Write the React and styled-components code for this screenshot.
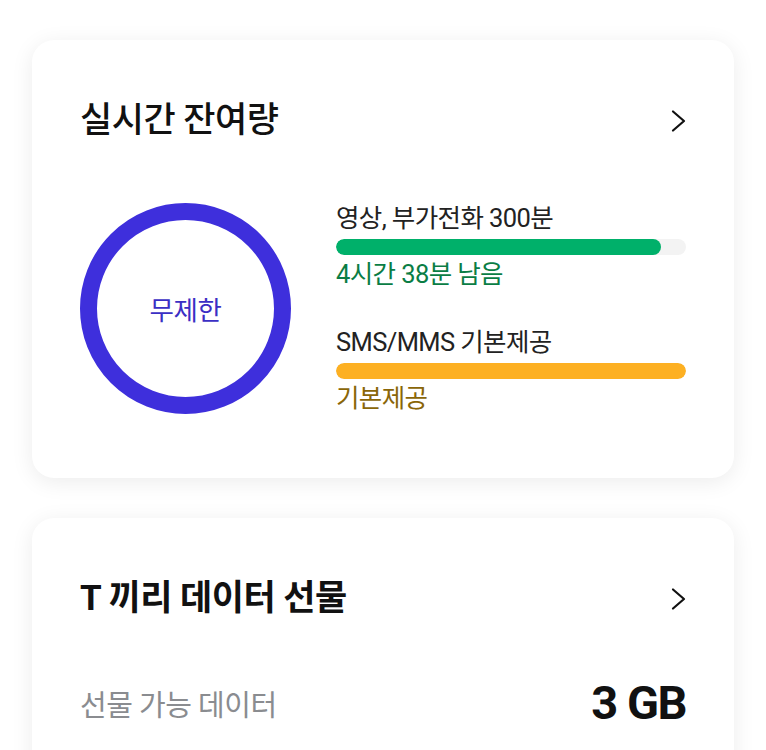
import React from "react";
import styled, { createGlobalStyle } from "styled-components";

const GlobalStyle = createGlobalStyle`
  body {
    margin: 0;
    background: #ffffff;
    font-family: Roboto, "Noto Sans CJK KR", sans-serif;
    color: #111;
  }
`;

const Page = styled.div`
  display: flex;
  flex-direction: column;
  gap: 40px;
  padding: 40px 32px 0;
`;

const Card = styled.section`
  background: #fff;
  border-radius: 22px;
  box-shadow: 0 4px 22px rgba(0, 0, 0, 0.08);
  padding: ${(p) => p.$pad};
`;

const Header = styled.div`
  display: flex;
  align-items: center;
  justify-content: space-between;
`;

const Title = styled.h2`
  margin: 0;
  font-size: 35px;
  line-height: 40px;
  font-weight: ${(p) => p.$weight || 500};
  letter-spacing: -0.5px;
`;

const ChevronBox = styled.span`
  display: flex;
  margin-right: -5px;
`;

const Body = styled.div`
  display: flex;
  align-items: center;
  gap: 45px;
  margin-top: 61px;
`;

const Ring = styled.div`
  position: relative;
  width: 211px;
  height: 211px;
  flex: none;
  display: grid;
  place-items: center;

  svg {
    position: absolute;
    inset: 0;
  }
`;

const RingLabel = styled.span`
  position: relative;
  font-size: 26.5px;
  color: #3b2fc4;
  letter-spacing: -0.3px;
`;

const Usage = styled.div`
  flex: 1;
  display: flex;
  flex-direction: column;
  gap: 36px;
`;

const Group = styled.div`
  display: flex;
  flex-direction: column;
`;

const Label = styled.div`
  font-size: 25.5px;
  line-height: 32px;
  color: ${(p) => p.$color};
  letter-spacing: -0.6px;
`;

const Track = styled.div`
  height: 16px;
  border-radius: 8px;
  background: #f3f3f3;
  margin: 5px 0 3px;
  overflow: hidden;
`;

const Fill = styled.div`
  height: 100%;
  border-radius: 8px;
  background: ${(p) => p.$color};
`;

const Row = styled.div`
  display: flex;
  align-items: center;
  justify-content: space-between;
  margin-top: 59px;
`;

const Muted = styled.span`
  font-size: 29px;
  color: #8a8c90;
  letter-spacing: -0.5px;
`;

const Amount = styled.span`
  font-size: 47px;
  font-weight: 700;
  letter-spacing: -1.5px;
  line-height: 50px;
`;

const Chevron = () => (
  <ChevronBox>
    <svg width="24" height="24" viewBox="0 0 24 24" fill="none">
      <path d="M6 2.5 L17 12 L6 21.5" stroke="#111" strokeWidth="2.2" strokeLinecap="round" strokeLinejoin="round" />
    </svg>
  </ChevronBox>
);

const Bar = ({ pct, color }) => (
  <Track>
    <Fill $color={color} style={{ width: `${pct}%` }} />
  </Track>
);

export default function App() {
  return (
    <Page>
      <GlobalStyle />
      <Card $pad="61px 48px 64px 48px">
        <Header>
          <Title>실시간 잔여량</Title>
          <Chevron />
        </Header>
        <Body>
          <Ring>
            <svg width="211" height="211" viewBox="0 0 211 211">
              <circle cx="105.5" cy="105.5" r="97" fill="none" stroke="#3e2fdc" strokeWidth="17" />
            </svg>
            <RingLabel>무제한</RingLabel>
          </Ring>
          <Usage>
            <Group>
              <Label $color="#222">영상, 부가전화 300분</Label>
              <Bar pct={92.9} color="#00b06a" />
              <Label $color="#0a7d45">4시간 38분 남음</Label>
            </Group>
            <Group>
              <Label $color="#222">SMS/MMS 기본제공</Label>
              <Bar pct={100} color="#fdb022" />
              <Label $color="#8a6608">기본제공</Label>
            </Group>
          </Usage>
        </Body>
      </Card>
      <Card $pad="61px 48px 60px 48px">
        <Header>
          <Title $weight={700}>T 끼리 데이터 선물</Title>
          <Chevron />
        </Header>
        <Row>
          <Muted>선물 가능 데이터</Muted>
          <Amount>3 GB</Amount>
        </Row>
      </Card>
    </Page>
  );
}
